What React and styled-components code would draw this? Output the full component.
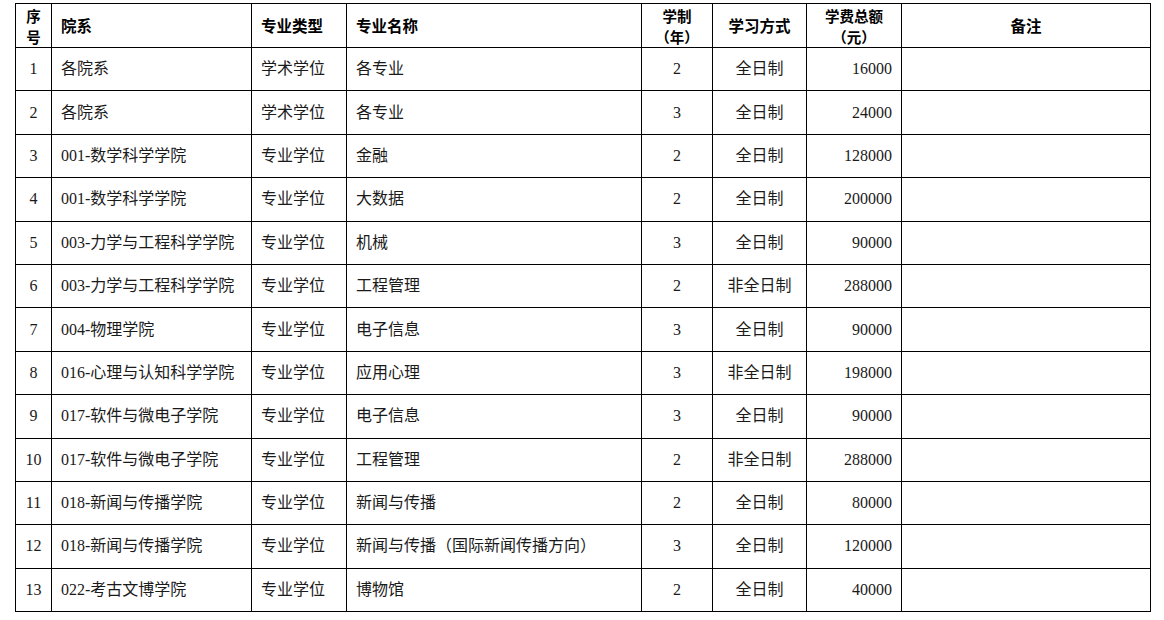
import styled, { createGlobalStyle } from "styled-components";

const GlobalStyle = createGlobalStyle`
  html, body {
    margin: 0;
    padding: 0;
    background: #ffffff;
  }
`;

const Page = styled.div`
  padding: 3px 15px 0 15px;
  font-family: "Liberation Serif", "Noto Sans CJK SC", serif;
  color: #111;
`;

const Table = styled.table`
  border-collapse: collapse;
  table-layout: fixed;
  width: 1135px;
  font-size: 16px;
`;

const HeadRow = styled.tr`
  height: 44px;
`;

const BodyRow = styled.tr`
  height: 43.4px;
`;

const Th = styled.th`
  border: 1.3px solid #000;
  padding: 0 ${(p) => (p.$pad ? "9px" : "0")};
  font-family: "Noto Sans CJK SC", sans-serif;
  font-weight: 700;
  font-size: ${(p) => (p.$stack ? "14.5px" : "15.5px")};
  line-height: 21px;
  text-align: ${(p) => p.$align || "center"};
  vertical-align: middle;
  color: #000;
`;

const Td = styled.td`
  border: 1.3px solid #000;
  padding: 0 ${(p) => (p.$pad ? "9px" : "0")};
  text-align: ${(p) => p.$align || "left"};
  vertical-align: middle;
  white-space: nowrap;
  line-height: 20px;
  color: #1a1a1a;
`;

const rows = [
  ["1", "各院系", "学术学位", "各专业", "2", "全日制", "16000"],
  ["2", "各院系", "学术学位", "各专业", "3", "全日制", "24000"],
  ["3", "001-数学科学学院", "专业学位", "金融", "2", "全日制", "128000"],
  ["4", "001-数学科学学院", "专业学位", "大数据", "2", "全日制", "200000"],
  ["5", "003-力学与工程科学学院", "专业学位", "机械", "3", "全日制", "90000"],
  ["6", "003-力学与工程科学学院", "专业学位", "工程管理", "2", "非全日制", "288000"],
  ["7", "004-物理学院", "专业学位", "电子信息", "3", "全日制", "90000"],
  ["8", "016-心理与认知科学学院", "专业学位", "应用心理", "3", "非全日制", "198000"],
  ["9", "017-软件与微电子学院", "专业学位", "电子信息", "3", "全日制", "90000"],
  ["10", "017-软件与微电子学院", "专业学位", "工程管理", "2", "非全日制", "288000"],
  ["11", "018-新闻与传播学院", "专业学位", "新闻与传播", "2", "全日制", "80000"],
  ["12", "018-新闻与传播学院", "专业学位", "新闻与传播（国际新闻传播方向）", "3", "全日制", "120000"],
  ["13", "022-考古文博学院", "专业学位", "博物馆", "2", "全日制", "40000"],
];

const widths = [36, 200, 95, 295, 71, 94, 95, 249];

const App = () => {
  return (
    <Page>
      <GlobalStyle />
      <Table>
        <colgroup>
          {widths.map((w, i) => (
            <col key={i} style={{ width: w }} />
          ))}
        </colgroup>
        <thead>
          <HeadRow>
            <Th $stack>
              序<br />号
            </Th>
            <Th $align="left" $pad>院系</Th>
            <Th $align="left" $pad>专业类型</Th>
            <Th $align="left" $pad>专业名称</Th>
            <Th $stack>
              学制<br />（年）
            </Th>
            <Th>学习方式</Th>
            <Th $stack>
              学费总额<br />（元）
            </Th>
            <Th>备注</Th>
          </HeadRow>
        </thead>
        <tbody>
          {rows.map((r) => (
            <BodyRow key={r[0]}>
              <Td $align="center">{r[0]}</Td>
              <Td $pad>{r[1]}</Td>
              <Td $pad>{r[2]}</Td>
              <Td $pad>{r[3]}</Td>
              <Td $align="center">{r[4]}</Td>
              <Td $align="center">{r[5]}</Td>
              <Td $align="right" $pad>{r[6]}</Td>
              <Td />
            </BodyRow>
          ))}
        </tbody>
      </Table>
    </Page>
  );
};

export default App;
